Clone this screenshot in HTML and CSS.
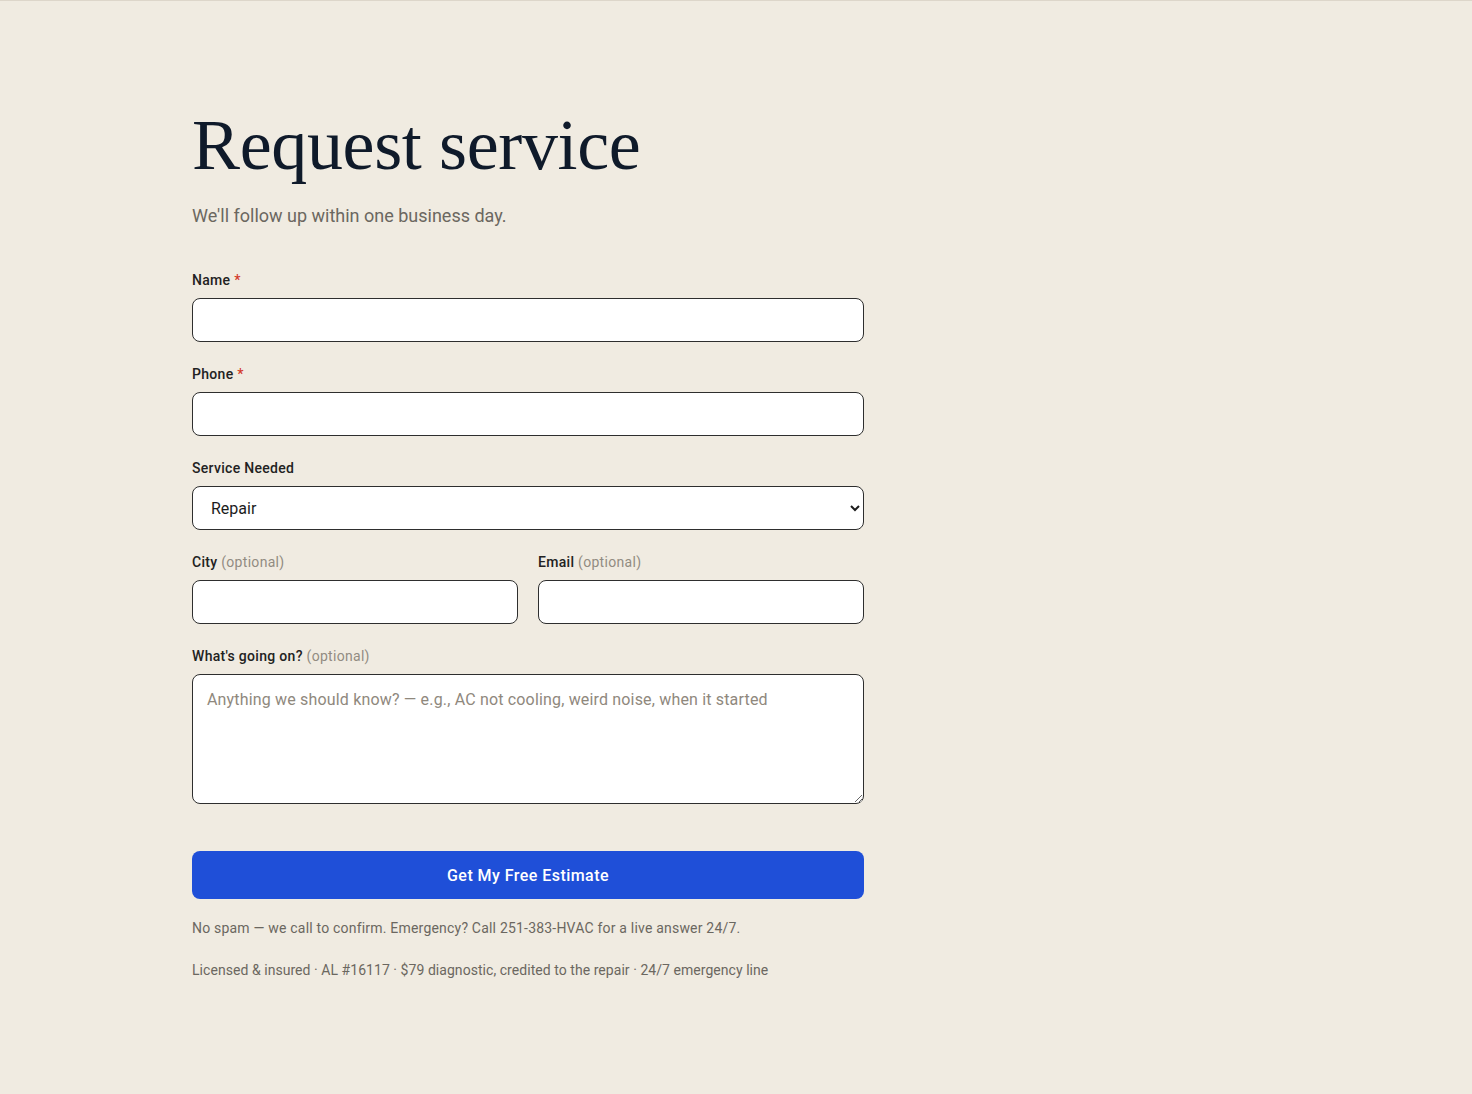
FILE: index.html
```html
<!DOCTYPE html>
<html lang="en">
<head>
    <meta charset="UTF-8">
    <meta name="viewport" content="width=device-width, initial-scale=1.0">
    <title>Request service</title>
    <link rel="stylesheet" href="styles.css">
</head>
<body>
    <main class="page">
        <h1 class="title">Request service</h1>
        <p class="lead">We'll follow up within one business day.</p>

        <form class="form" onsubmit="return false;">
            <div class="field">
                <label class="label" for="name">Name <span class="req">*</span></label>
                <input class="input" id="name" type="text">
            </div>

            <div class="field">
                <label class="label" for="phone">Phone <span class="req">*</span></label>
                <input class="input" id="phone" type="tel">
            </div>

            <div class="field">
                <label class="label" for="service">Service Needed</label>
                <select class="input select" id="service">
                    <option>Repair</option>
                    <option>Maintenance</option>
                    <option>Installation</option>
                </select>
            </div>

            <div class="field-row">
                <div class="field">
                    <label class="label" for="city">City <span class="opt">(optional)</span></label>
                    <input class="input" id="city" type="text">
                </div>
                <div class="field">
                    <label class="label" for="email">Email <span class="opt">(optional)</span></label>
                    <input class="input" id="email" type="email">
                </div>
            </div>

            <div class="field">
                <label class="label" for="notes">What's going on? <span class="opt">(optional)</span></label>
                <textarea class="input textarea" id="notes" placeholder="Anything we should know? — e.g., AC not cooling, weird noise, when it started"></textarea>
            </div>

            <button class="submit" type="submit">Get My Free Estimate</button>
        </form>

        <p class="note">No spam — we call to confirm. Emergency? Call 251-383-HVAC for a live answer 24/7.</p>
        <p class="note note-trust">Licensed &amp; insured · AL #16117 · $79 diagnostic, credited to the repair · 24/7 emergency line</p>
    </main>
</body>
</html>
```

FILE: styles.css
```css
body {
    margin: 0;
    background: #f0ebe1;
    border-top: 1px solid #ddd6ca;
    font-family: 'Roboto', 'Liberation Sans', sans-serif;
    color: #1c1c1c;
}

.page {
    width: 672px;
    padding: 100px 0 80px 192px;
}

.title {
    margin: 0;
    font-family: 'Liberation Serif', serif;
    font-weight: 400;
    font-size: 72px;
    line-height: 88px;
    letter-spacing: -0.005em;
    color: #0f1a2a;
}

.lead {
    margin: 13px 0 0;
    font-size: 18px;
    line-height: 28px;
    color: #6b6760;
}

.form {
    display: flex;
    flex-direction: column;
    gap: 22px;
    margin-top: 40px;
}

.field {
    display: flex;
    flex-direction: column;
    gap: 8px;
    flex: 1;
}

.field-row {
    display: flex;
    gap: 20px;
}

.label {
    font-size: 14px;
    line-height: 20px;
    font-weight: 500;
    letter-spacing: 0.3px;
    color: #222;
}

.req {
    color: #d33a2c;
}

.opt {
    font-weight: 400;
    color: #928c82;
}

.input {
    box-sizing: border-box;
    width: 100%;
    height: 44px;
    padding: 0 18px;
    border: 1px solid #2e2e2e;
    border-radius: 8px;
    background: #fff;
    font-family: inherit;
    font-size: 16px;
    color: #1c1c1c;
}

.select {
    padding: 0 8px 0 14px;
}

.textarea {
    height: 130px;
    padding: 14px 14px;
    line-height: 22px;
    letter-spacing: 0.17px;
    resize: vertical;
}

.textarea::placeholder {
    color: #8f887d;
}

.submit {
    margin-top: 25px;
    height: 48px;
    border: none;
    border-radius: 8px;
    background: #1f4fd8;
    color: #fff;
    font-family: inherit;
    font-size: 16px;
    font-weight: 500;
    letter-spacing: 0.45px;
    cursor: pointer;
}

.note {
    margin: 19px 0 0;
    font-size: 14px;
    line-height: 20px;
    letter-spacing: 0.2px;
    color: #6b6760;
}

.note + .note {
    margin-top: 22px;
}

.note-trust {
    letter-spacing: 0.05px;
}
```
